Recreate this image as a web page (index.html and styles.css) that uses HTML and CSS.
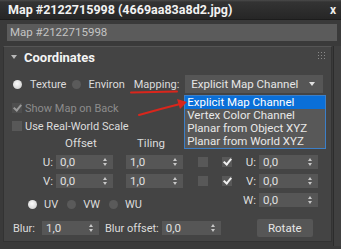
FILE: index.html
```html
<!DOCTYPE html>
<html lang="en">
<head>
  <meta charset="UTF-8">
  <title>Map #2122715998</title>
  <link rel="stylesheet" href="styles.css">
</head>
<body>
  <div class="titlebar">
    <span class="title">Map #2122715998 (4669aa83a8d2.jpg)</span>
    <span class="close">x</span>
  </div>

  <div class="namefield">Map #2122715998</div>

  <div class="main">
    <div class="rollout">
      <svg class="grip" width="7" height="7" viewBox="0 0 7 7">
        <g fill="#8a8a8a">
          <rect x="0" y="0" width="1" height="1"/><rect x="3" y="0" width="1" height="1"/><rect x="6" y="0" width="1" height="1"/>
          <rect x="0" y="3" width="1" height="1"/><rect x="3" y="3" width="1" height="1"/><rect x="6" y="3" width="1" height="1"/>
          <rect x="0" y="6" width="1" height="1"/><rect x="3" y="6" width="1" height="1"/><rect x="6" y="6" width="1" height="1"/>
        </g>
      </svg>

      <div class="rollout-head"><span class="tri"></span>Coordinates</div>

      <div class="row mapping-row">
        <span class="radio on"></span><span class="lbl texture">Texture</span>
        <span class="radio"></span><span class="lbl environ">Environ</span>
        <span class="lbl mapping-lbl">Mapping:</span>
        <div class="select">
          <span>Explicit Map Channel</span>
          <span class="caret"></span>
          <ul class="dropdown">
            <li class="active">Explicit Map Channel</li>
            <li>Vertex Color Channel</li>
            <li>Planar from Object XYZ</li>
            <li>Planar from World XYZ</li>
          </ul>
        </div>
        <svg class="arrow" width="52" height="20" viewBox="0 0 52 20">
          <path d="M1 17 C 15 13, 30 9, 46 5" stroke="#d9261c" stroke-width="2" fill="none" stroke-linecap="round"/>
          <path d="M39 1 L49 4 L42 11 Z" fill="#d9261c"/>
        </svg>
      </div>

      <div class="row check-row disabled"><span class="cb checked"></span>Show Map on Back</div>
      <div class="row check-row"><span class="cb"></span>Use Real-World Scale</div>

      <div class="uvw">
        <span></span>
        <span class="colhead offset">Offset</span>
        <span class="colhead tiling">Tiling</span>
        <span class="filler4"></span>

        <span class="axis">U:</span>
        <div class="spin">0,0<span class="spin-arrows"></span></div>
        <div class="spin">1,0<span class="spin-arrows"></span></div>
        <span class="cb"></span>
        <span class="cb checked"></span>
        <span class="axis">U:</span>
        <div class="spin wide">0,0<span class="spin-arrows"></span></div>

        <span class="axis">V:</span>
        <div class="spin">0,0<span class="spin-arrows"></span></div>
        <div class="spin">1,0<span class="spin-arrows"></span></div>
        <span class="cb"></span>
        <span class="cb checked"></span>
        <span class="axis">V:</span>
        <div class="spin wide">0,0<span class="spin-arrows"></span></div>

        <div class="uv-radios">
          <span class="radio on"></span><span class="lbl">UV</span>
          <span class="radio"></span><span class="lbl">VW</span>
          <span class="radio"></span><span class="lbl">WU</span>
        </div>
        <span class="filler2"></span>
        <span class="axis">W:</span>
        <div class="spin wide">0,0<span class="spin-arrows"></span></div>
      </div>

      <div class="row blur-row">
        <span class="lbl">Blur:</span>
        <div class="spin blur">1,0<span class="spin-arrows"></span></div>
        <span class="lbl">Blur offset:</span>
        <div class="spin blur-off">0,0<span class="spin-arrows"></span></div>
        <button class="rotate">Rotate</button>
      </div>
    </div>
    <div class="scroll"></div>
  </div>
</body>
</html>
```

FILE: styles.css
```css
body {
  margin: 0; width: 341px; height: 249px; overflow: hidden;
  background: #3a3a3a; color: #dcdcdc;
  font-family: Roboto, "Liberation Sans", sans-serif; font-size: 11px;
}

.titlebar {
  height: 20px; display: flex; align-items: center; justify-content: space-between;
  padding: 0 5px 0 8px; box-sizing: border-box;
  background: linear-gradient(#4a4a4a 0, #333 2px, #262626 100%);
  border-bottom: 1px solid #1c1c1c;
}
.title { color: #f2f2f2; font-weight: bold; font-size: 12.5px; }
.close { color: #eee; font-weight: bold; font-size: 12px; }

.namefield {
  margin: 4px 4px 0 7px; height: 17px; line-height: 17px;
  padding-left: 3px; background: #5b5b5b; color: #c4c4c4; font-size: 11.5px;
}

.main { display: flex; margin-top: 5px; height: 200px; }
.rollout {
  position: relative; margin-left: 3px; width: 328px; height: 194px;
  background: #444; border: 1px solid #333; border-top-color: #555;
}
.scroll { margin-left: 1px; width: 7px; border-left: 1px solid #2c2c2c; background: #404040; }
.grip { position: absolute; right: 6px; top: 5px; }

.rollout-head {
  height: 21px; display: flex; align-items: center;
  font-weight: bold; font-size: 13px; color: #f4f4f4; padding-left: 7px;
}
.tri {
  width: 0; height: 0; margin-right: 7px; margin-top: -2px;
  border-left: 3px solid transparent; border-right: 3px solid transparent;
  border-top: 4px solid #b8b8b8;
}

.row { display: flex; align-items: center; }
.mapping-row { position: relative; margin-top: 7px; height: 18px; padding-left: 9px; }
.lbl { margin-left: 6px; }
.texture { margin-left: 8px; margin-right: 6px; }
.environ { margin-left: 7px; margin-right: 9px; }
.mapping-lbl { position: relative; margin-left: 0; margin-right: 6px; }
.mapping-lbl::after {
  content: ""; position: absolute; left: -4px; right: 2px; bottom: -2px;
  height: 2px; background: #d9261c; border-radius: 1px; transform: rotate(-1deg);
}

.radio {
  width: 9px; height: 9px; border-radius: 50%; background: #5a5a5a; flex: none;
}
.radio.on { background: radial-gradient(circle at 45% 40%, #fafafa 0, #dcdcdc 60%, #bbb 100%); }

.select {
  position: relative; width: 138px; height: 18px; box-sizing: border-box;
  background: #565656; display: flex; align-items: center; padding-left: 6px;
  font-size: 11.5px; color: #e6e6e6;
}
.caret {
  position: absolute; right: 8px; top: 7px;
  border-left: 3px solid transparent; border-right: 3px solid transparent;
  border-top: 4px solid #e0e0e0;
}
.dropdown {
  position: absolute; left: -1px; top: 20px; width: 142px; margin: 0; padding: 0;
  list-style: none; background: #585858; border: 1px solid #3c7fc8; box-sizing: border-box;
  z-index: 2;
}
.dropdown li { height: 13px; line-height: 13px; padding-left: 2px; color: #e8e8e8; }
.dropdown li.active { background: #0a6fd8; color: #fff; }

.arrow { position: absolute; left: 134px; top: 23px; z-index: 3; }

.check-row { padding-left: 8px; height: 12px; }
.disabled { color: #8c8c8c; margin-top: 9px; }
.check-row + .check-row { margin-top: 6px; }
.cb { width: 10px; height: 10px; background: #585858; flex: none; margin-right: 3px; position: relative; }
.disabled .cb { background: #4e4e4e; }
.cb.checked::after {
  content: ""; position: absolute; left: 3px; top: 0px; width: 3px; height: 6px;
  border: solid #f0f0f0; border-width: 0 2px 2px 0; transform: rotate(40deg);
}
.disabled .cb.checked::after { border-color: #9a9a9a; }

.uvw {
  display: grid; margin-top: 3px;
  grid-template-columns: 44px 70px 72px 24px 20px 17px 59px;
  grid-template-rows: 15px 14px 14px 14px; row-gap: 5px;
  align-items: center; padding-left: 8px;
}
.colhead { font-size: 11.5px; }
.offset { padding-left: 9px; }
.tiling { padding-left: 11px; }
.filler4 { grid-column: span 4; }
.filler2 { grid-column: span 2; }
.axis { text-align: right; padding-right: 3px; font-size: 11.5px; }
.uvw .cb { margin: 0; }
.spin {
  position: relative; height: 14px; box-sizing: border-box; background: #565656;
  padding-left: 4px; line-height: 14px; font-size: 11.5px; color: #e0e0e0;
}
.uvw .spin { width: 57px; }
.uvw .spin.wide { width: 59px; }
.spin-arrows { position: absolute; right: 5px; top: 3px; width: 5px; height: 8px; }
.spin-arrows::before, .spin-arrows::after {
  content: ""; position: absolute; left: 0;
  border-left: 2.5px solid transparent; border-right: 2.5px solid transparent;
}
.spin-arrows::before { top: 0; border-bottom: 3px solid #c8c8c8; }
.spin-arrows::after { bottom: 0; border-top: 3px solid #c8c8c8; }

.uv-radios {
  grid-column: span 3; display: flex; align-items: center;
  padding-left: 16px; align-self: end; margin-bottom: -4px;
}
.uv-radios .lbl { margin-left: 7px; margin-right: 9px; }

.blur-row { margin-top: 12px; padding-left: 3px; height: 18px; }
.blur-row .lbl { margin-left: 6px; }
.blur { width: 57px; margin-left: 7px; }
.blur-off { width: 59px; margin-left: 3px; }
.rotate {
  margin-left: 36px; width: 56px; height: 18px; padding: 0;
  background: #565656; color: #e6e6e6; border: none; border-radius: 2px;
  font-family: inherit; font-size: 11.5px;
}
```
